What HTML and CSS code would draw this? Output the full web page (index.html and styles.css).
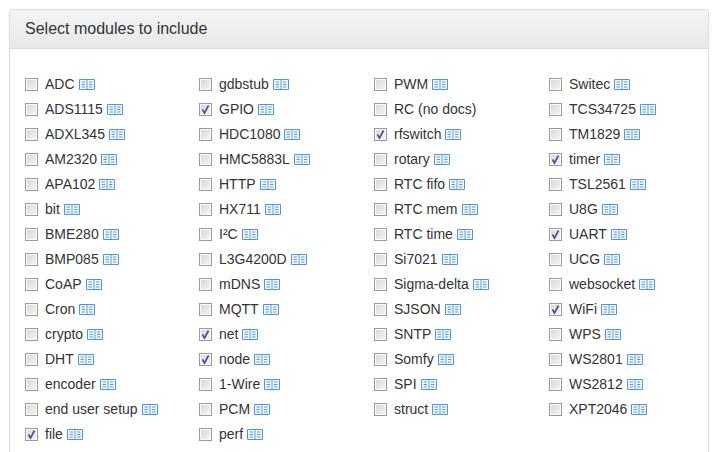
FILE: index.html
```html
<!DOCTYPE html>
<html lang="en">
<head>
<meta charset="utf-8">
<title>Select modules</title>
<link rel="stylesheet" href="styles.css">
</head>
<body>
<svg class="defs" width="0" height="0" aria-hidden="true">
  <symbol id="book" viewBox="0 0 16 11">
    <path d="M.5 .5h15v10h-15z" fill="#f2f8fd" stroke="#4e95d2"/>
    <path d="M8 .5v10M2.500 3h3.500M2.500 5.500h3.500M2.500 8h3.500M10 3h3.500M10 5.500h3.500M10 8h3.500" fill="none" stroke="#5a9dd6"/>
  </symbol>
  <symbol id="tick" viewBox="0 0 11 11">
    <path d="M2.500 5.500l2 3.500 4-7.500" fill="none" stroke="#4d4d8f" stroke-width="1.600"/>
  </symbol>
</svg>
<section class="panel">
  <header class="panel-head"><h1>Select modules to include</h1></header>
  <div class="panel-body">
    <ul class="col">
      <li><span class="cb"></span>ADC<svg class="book"><use href="#book"/></svg></li>
      <li><span class="cb"></span>ADS1115<svg class="book"><use href="#book"/></svg></li>
      <li><span class="cb"></span>ADXL345<svg class="book"><use href="#book"/></svg></li>
      <li><span class="cb"></span>AM2320<svg class="book"><use href="#book"/></svg></li>
      <li><span class="cb"></span>APA102<svg class="book"><use href="#book"/></svg></li>
      <li><span class="cb"></span>bit<svg class="book"><use href="#book"/></svg></li>
      <li><span class="cb"></span>BME280<svg class="book"><use href="#book"/></svg></li>
      <li><span class="cb"></span>BMP085<svg class="book"><use href="#book"/></svg></li>
      <li><span class="cb"></span>CoAP<svg class="book"><use href="#book"/></svg></li>
      <li><span class="cb"></span>Cron<svg class="book"><use href="#book"/></svg></li>
      <li><span class="cb"></span>crypto<svg class="book"><use href="#book"/></svg></li>
      <li><span class="cb"></span>DHT<svg class="book"><use href="#book"/></svg></li>
      <li><span class="cb"></span>encoder<svg class="book"><use href="#book"/></svg></li>
      <li><span class="cb"></span>end user setup<svg class="book"><use href="#book"/></svg></li>
      <li><span class="cb"><svg class="tick"><use href="#tick"/></svg></span>file<svg class="book"><use href="#book"/></svg></li>
    </ul>
    <ul class="col">
      <li><span class="cb"></span>gdbstub<svg class="book"><use href="#book"/></svg></li>
      <li><span class="cb"><svg class="tick"><use href="#tick"/></svg></span>GPIO<svg class="book"><use href="#book"/></svg></li>
      <li><span class="cb"></span>HDC1080<svg class="book"><use href="#book"/></svg></li>
      <li><span class="cb"></span>HMC5883L<svg class="book"><use href="#book"/></svg></li>
      <li><span class="cb"></span>HTTP<svg class="book"><use href="#book"/></svg></li>
      <li><span class="cb"></span>HX711<svg class="book"><use href="#book"/></svg></li>
      <li><span class="cb"></span>I²C<svg class="book"><use href="#book"/></svg></li>
      <li><span class="cb"></span>L3G4200D<svg class="book"><use href="#book"/></svg></li>
      <li><span class="cb"></span>mDNS<svg class="book"><use href="#book"/></svg></li>
      <li><span class="cb"></span>MQTT<svg class="book"><use href="#book"/></svg></li>
      <li><span class="cb"><svg class="tick"><use href="#tick"/></svg></span>net<svg class="book"><use href="#book"/></svg></li>
      <li><span class="cb"><svg class="tick"><use href="#tick"/></svg></span>node<svg class="book"><use href="#book"/></svg></li>
      <li><span class="cb"></span>1-Wire<svg class="book"><use href="#book"/></svg></li>
      <li><span class="cb"></span>PCM<svg class="book"><use href="#book"/></svg></li>
      <li><span class="cb"></span>perf<svg class="book"><use href="#book"/></svg></li>
    </ul>
    <ul class="col">
      <li><span class="cb"></span>PWM<svg class="book"><use href="#book"/></svg></li>
      <li><span class="cb"></span>RC (no docs)</li>
      <li><span class="cb"><svg class="tick"><use href="#tick"/></svg></span>rfswitch<svg class="book"><use href="#book"/></svg></li>
      <li><span class="cb"></span>rotary<svg class="book"><use href="#book"/></svg></li>
      <li><span class="cb"></span>RTC fifo<svg class="book"><use href="#book"/></svg></li>
      <li><span class="cb"></span>RTC mem<svg class="book"><use href="#book"/></svg></li>
      <li><span class="cb"></span>RTC time<svg class="book"><use href="#book"/></svg></li>
      <li><span class="cb"></span>Si7021<svg class="book"><use href="#book"/></svg></li>
      <li><span class="cb"></span>Sigma-delta<svg class="book"><use href="#book"/></svg></li>
      <li><span class="cb"></span>SJSON<svg class="book"><use href="#book"/></svg></li>
      <li><span class="cb"></span>SNTP<svg class="book"><use href="#book"/></svg></li>
      <li><span class="cb"></span>Somfy<svg class="book"><use href="#book"/></svg></li>
      <li><span class="cb"></span>SPI<svg class="book"><use href="#book"/></svg></li>
      <li><span class="cb"></span>struct<svg class="book"><use href="#book"/></svg></li>
    </ul>
    <ul class="col">
      <li><span class="cb"></span>Switec<svg class="book"><use href="#book"/></svg></li>
      <li><span class="cb"></span>TCS34725<svg class="book"><use href="#book"/></svg></li>
      <li><span class="cb"></span>TM1829<svg class="book"><use href="#book"/></svg></li>
      <li><span class="cb"><svg class="tick"><use href="#tick"/></svg></span>timer<svg class="book"><use href="#book"/></svg></li>
      <li><span class="cb"></span>TSL2561<svg class="book"><use href="#book"/></svg></li>
      <li><span class="cb"></span>U8G<svg class="book"><use href="#book"/></svg></li>
      <li><span class="cb"><svg class="tick"><use href="#tick"/></svg></span>UART<svg class="book"><use href="#book"/></svg></li>
      <li><span class="cb"></span>UCG<svg class="book"><use href="#book"/></svg></li>
      <li><span class="cb"></span>websocket<svg class="book"><use href="#book"/></svg></li>
      <li><span class="cb"><svg class="tick"><use href="#tick"/></svg></span>WiFi<svg class="book"><use href="#book"/></svg></li>
      <li><span class="cb"></span>WPS<svg class="book"><use href="#book"/></svg></li>
      <li><span class="cb"></span>WS2801<svg class="book"><use href="#book"/></svg></li>
      <li><span class="cb"></span>WS2812<svg class="book"><use href="#book"/></svg></li>
      <li><span class="cb"></span>XPT2046<svg class="book"><use href="#book"/></svg></li>
    </ul>
  </div>
</section>
</body>
</html>
```
FILE: styles.css
```css
html, body {
  margin: 0;
  background: #fff;
  overflow: hidden;
}
body {
  height: 452px;
  padding: 9px 15px 0 9px;
  box-sizing: border-box;
  font-family: "Liberation Sans", Arial, sans-serif;
  color: #333;
}
.defs {
  position: absolute;
}
.panel {
  border: 1px solid #ddd;
  border-bottom: 0;
  border-radius: 4px 4px 0 0;
  height: 443px;
  box-sizing: border-box;
}
.panel-head {
  height: 39px;
  box-sizing: border-box;
  padding: 0 15px;
  display: flex;
  align-items: center;
  background: linear-gradient(#f5f5f5, #e8e8e8);
  border-bottom: 1px solid #ddd;
  border-radius: 3px 3px 0 0;
}
h1 {
  margin: 0;
  font-size: 16px;
  font-weight: 400;
  color: #333;
}
.panel-body {
  display: grid;
  grid-template-columns: 174px 175px 175px 174px;
  padding-top: 23px;
}
.col {
  margin: 0;
  padding: 0 0 0 15px;
  list-style: none;
}
.col li {
  height: 25px;
  display: flex;
  align-items: center;
  font-size: 14px;
  line-height: 25px;
  white-space: nowrap;
}
.cb {
  flex: none;
  width: 13px;
  height: 13px;
  margin-right: 7px;
  box-sizing: border-box;
  border: 1px solid #9a9a9a;
  background: linear-gradient(135deg, #d6d6d6, #f6f6f6);
  box-shadow: inset 0 0 0 1px #fbfbfb;
  display: flex;
}
.tick {
  width: 11px;
  height: 11px;
}
.book {
  flex: none;
  width: 16px;
  height: 11px;
  margin-left: 4px;
}
```
